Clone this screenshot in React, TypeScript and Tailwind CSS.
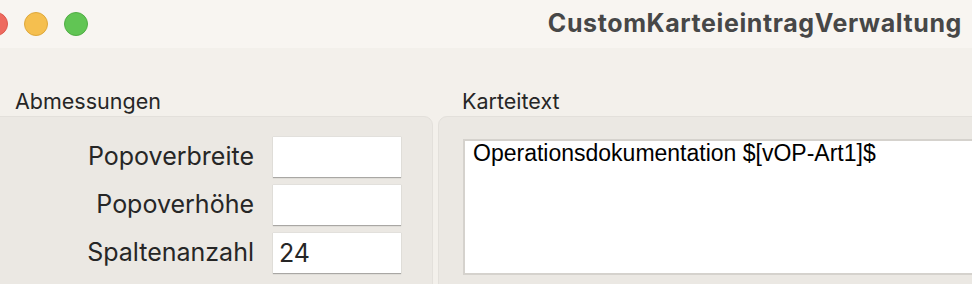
import { useState } from 'react';

const labelFont = { fontFamily: 'Inter, "Noto Sans", sans-serif' };

function Field({ label, value }: { label: string; value: string }) {
  return (
    <div className="flex items-center h-[41px]">
      <label className="w-[282px] pr-[19px] text-right text-[25px] text-[#262626]" style={labelFont}>
        {label}
      </label>
      <input
        type="text"
        defaultValue={value}
        className="w-[128px] h-[41px] px-[6px] bg-white text-[25px] text-[#262626] border-t border-[#e2e0dc] shadow-[0_1px_1px_rgba(0,0,0,0.28)] outline-none"
        style={labelFont}
      />
    </div>
  );
}

export default function App() {
  const [text, setText] = useState('Operationsdokumentation $[vOP-Art1]$');

  return (
    <div className="w-[972px] h-[284px] overflow-hidden bg-[#f3f0eb]" style={labelFont}>
      {/* title bar */}
      <div className="h-[48px] flex items-center bg-[#f8f5f1]">
        <div className="flex gap-[16px] ml-[-16px]">
          <span className="w-[24px] h-[24px] rounded-full bg-[#ee6a5f] border border-[#dc5a4f]" />
          <span className="w-[24px] h-[24px] rounded-full bg-[#f5bf4f] border border-[#dea83c]" />
          <span className="w-[24px] h-[24px] rounded-full bg-[#61c554] border border-[#51ad45]" />
        </div>
        <div className="ml-auto mr-[10px] text-[25px] tracking-[0.6px] font-bold text-[#474747]">
          CustomKarteieintragVerwaltung
        </div>
      </div>

      {/* body */}
      <div className="flex gap-[5px] pt-[41px]">
        <div className="ml-[-10px] w-[443px] shrink-0">
          <div className="pl-[25px] h-[27px] text-[21.5px] leading-[24px] text-[#262626]">Abmessungen</div>
          <div className="h-[200px] rounded-[9px] bg-[#ebe8e3] border border-[#e3e0db] pt-[19px] flex flex-col gap-[7px]">
            <Field label="Popoverbreite" value="" />
            <Field label="Popoverhöhe" value="" />
            <Field label="Spaltenanzahl" value="24" />
          </div>
        </div>
        <div className="w-[560px] shrink-0">
          <div className="pl-[24px] h-[27px] text-[21.5px] leading-[24px] text-[#262626]">Karteitext</div>
          <div className="h-[200px] rounded-[9px] bg-[#ebe8e3] border border-[#e3e0db] pt-[22px] pl-[24px]">
            <textarea
              value={text}
              onChange={(e) => setText(e.target.value)}
              className="block w-[600px] h-[136px] resize-none bg-white border-2 border-[#d5d2cd] px-[8px] pt-0 text-[23px] leading-[24px] text-black outline-none"
              style={{ fontFamily: '"Liberation Sans", Arial, sans-serif' }}
            />
          </div>
        </div>
      </div>
    </div>
  );
}
